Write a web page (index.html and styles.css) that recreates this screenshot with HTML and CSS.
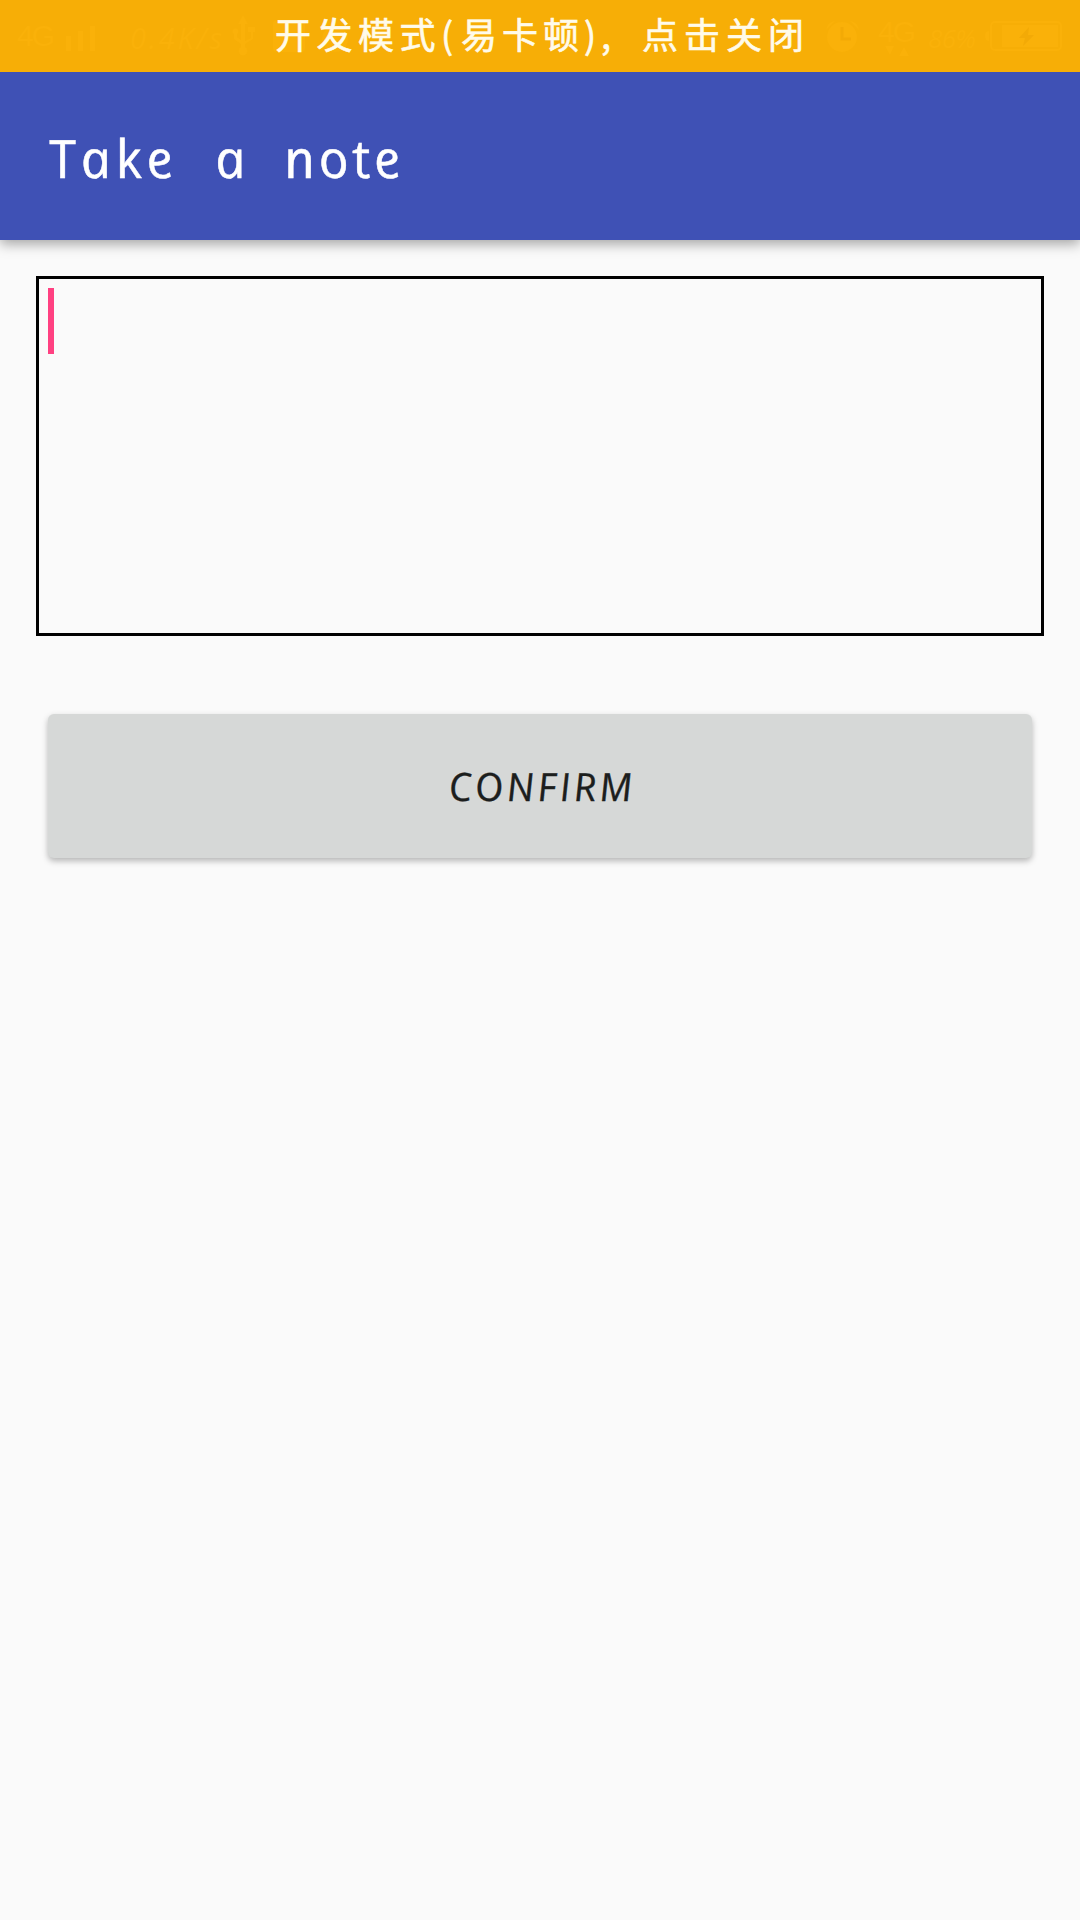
FILE: index.html
```html
<!DOCTYPE html>
<html lang="zh-CN">
<head>
<meta charset="utf-8">
<title>Take a note</title>
<link rel="stylesheet" href="styles.css">
</head>
<body>
<div class="banner">
  <svg class="status" viewBox="0 0 1080 72" width="1080" height="72" aria-hidden="true">
    <g class="status-text">
      <text x="17" y="46" font-size="30" textLength="38">4G</text>
      <text class="slant" x="130" y="49" font-size="29" textLength="92">0.4K/s</text>
      <text x="878" y="42" font-size="30" textLength="38">4G</text>
      <text class="slant" x="928" y="48" font-size="26" textLength="48">86%</text>
    </g>
    <rect x="66" y="36" width="5" height="15"/>
    <rect x="78" y="31" width="5" height="20"/>
    <rect x="90" y="26" width="5" height="25"/>
    <path d="M243 15l5 9h-3v17l6-3v-6h-3v-5h7v5h-2v7l-8 5v3a4.500 4.500 0 1 1-4 0v-3l-7-5v-5a3 3 0 1 1 3 0v3l4 3V24h-3z"/>
    <rect x="273" y="20" width="32" height="32" rx="4"/>
    <circle cx="335" cy="39" r="13"/>
    <circle cx="842" cy="37" r="15"/>
    <path d="M826 30q1-8 9-9zM859 30q-1-8-9-9z"/>
    <path class="cutline" d="M842 27v12h9"/>
    <path d="M885 46h9l-4 9zM899 56h10l-5-9z"/>
    <rect class="cell" x="991" y="22" width="70" height="28" rx="4"/>
    <path d="M989 31q-4 0-4 5t4 5z"/>
    <rect x="1002" y="25" width="56" height="22"/>
    <path class="cut" d="M1029 27l-10 11h6l-2 8 11-11h-6z"/>
  </svg>
  <div class="banner-text"><span class="mode">开发模式</span><span class="open">(</span><span class="lag">易卡顿</span><span class="close">)</span><span class="comma">,</span><span class="tap">点击关闭</span></div>
</div>
<header class="app-bar">
  <h1 class="title"><span class="w-take">Take</span><span class="w-a">a</span><span class="w-note">note</span></h1>
</header>
<main class="content">
  <div class="editor"><div class="caret"></div></div>
  <button class="confirm" type="button"><span>CONFIRM</span></button>
</main>
</body>
</html>
```
FILE: styles.css
```css
* { box-sizing: border-box; }

body {
  margin: 0;
  width: 1080px;
  height: 1920px;
  overflow: hidden;
  background: #fafafa;
  font-family: "Open Sans", "Noto Sans CJK SC", sans-serif;
}

.banner {
  position: relative;
  height: 72px;
  background: #f7ae06;
}

.status {
  position: absolute;
  top: 0;
  left: 0;
  fill: #fab109;
}

.status-text { font-family: "Liberation Sans", sans-serif; }
.slant { font-family: "Open Sans", sans-serif; font-style: italic; }
.cell { fill: none; stroke: #fab109; stroke-width: 2; }
.cut { fill: #f3aa06; }
.cutline { fill: none; stroke: #f3aa06; stroke-width: 3; }

.banner-text {
  position: relative;
  display: flex;
  height: 72px;
  padding-left: 275px;
  color: #fffbea;
  font-family: "Noto Sans CJK SC", sans-serif;
  font-size: 36px;
  line-height: 66px;
  white-space: nowrap;
  -webkit-text-stroke: 0.6px #fffbea;
}

.banner-text span { flex: none; }
.mode { width: 166px; letter-spacing: 5.5px; }
.open { width: 20px; }
.lag { width: 123px; letter-spacing: 5px; }
.close { width: 17px; }
.comma { width: 41px; }
.tap { letter-spacing: 6px; }

.app-bar {
  display: flex;
  align-items: center;
  height: 168px;
  padding: 4px 0 0 48px;
  background: #3f51b5;
  box-shadow: 0 4px 12px rgba(0, 0, 0, 0.35);
}

.title {
  display: flex;
  margin: 0;
  color: #fff;
  font-size: 53px;
  font-weight: 400;
  font-style: italic;
  line-height: 72px;
  transform: skewX(12deg);
  -webkit-text-stroke: 0.5px #fff;
}

.w-take { width: 166px; letter-spacing: 5px; }
.w-a { width: 69px; }
.w-note { letter-spacing: 4px; }

.content {
  display: flex;
  flex-direction: column;
  padding: 36px;
}

.editor {
  height: 360px;
  padding: 9px;
  border: 3px solid #000;
}

.caret {
  width: 6px;
  height: 66px;
  background: #ff4081;
}

.confirm {
  height: 144px;
  margin: 78px 12px 0;
  padding: 0 0 1px;
  border: 0;
  border-radius: 6px;
  background: #d6d8d7;
  box-shadow: 0 3px 6px rgba(0, 0, 0, 0.28);
  color: #1c1e1d;
  font-family: "Open Sans", sans-serif;
  font-size: 39px;
  font-style: italic;
  letter-spacing: 3.5px;
  -webkit-text-stroke: 0.3px #1c1e1d;
}

.confirm span {
  display: inline-block;
  margin-right: -3px;
  transform: skewX(6deg);
}
```
